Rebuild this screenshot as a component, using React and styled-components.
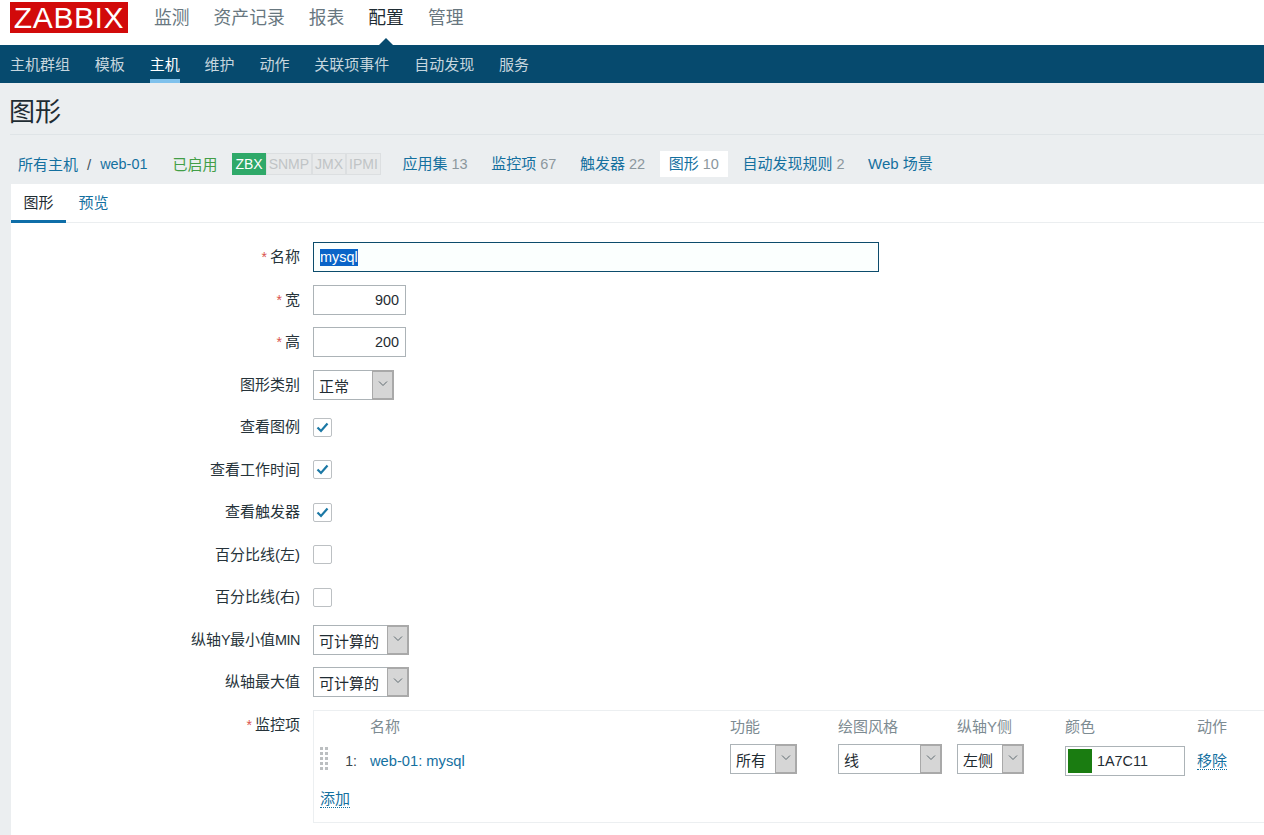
import React from "react";
import styled, { createGlobalStyle } from "styled-components";

const Global = createGlobalStyle`
  html, body { margin: 0; padding: 0; height: 835px; overflow: hidden; background: #ebeef0; }
  body { font-family: "Liberation Sans", "Noto Sans CJK SC", sans-serif; font-size: 15px; color: #1f2c33; }
  * { box-sizing: border-box; }
`;

const TopBar = styled.header`
  height: 45px; background: #fff; display: flex; align-items: flex-start; padding-left: 10px; gap: 26px;
`;
const Logo = styled.div`
  width: 118px; height: 31px; margin-top: 2px; background: #d20a0a; color: #fff;
  font-size: 30px; line-height: 32px; text-align: center; letter-spacing: 0.6px; font-family: "Liberation Sans", sans-serif;
`;
const TopMenu = styled.nav`
  display: flex; gap: 24px; height: 45px; align-items: flex-start; padding-top: 5.5px;
`;
const TopItem = styled.a`
  position: relative; font-size: 17.8px; line-height: 24px; color: ${p => (p.$active ? "#1f2c33" : "#68777f")};
  ${p => p.$active && `
    &::after {
      content: ""; position: absolute; left: 50%; margin-left: -7px; top: 32.5px;
      border-left: 7px solid transparent; border-right: 7px solid transparent; border-bottom: 7px solid #064a6e;
    }`}
`;
const SubBar = styled.nav`
  height: 38px; background: #064a6e; display: flex; gap: 24.85px; padding-left: 10px;
`;
const SubItem = styled.a`
  height: 38px; line-height: 39px; font-size: 15px; color: ${p => (p.$active ? "#fff" : "#c6d6de")};
  border-bottom: ${p => (p.$active ? "4px solid #7fc1ec" : "0")};
`;
const TitleBar = styled.div`
  height: 52px; margin-left: 10px; border-bottom: 1px solid #dfe4e7; display: flex; align-items: center;
`;
const Title = styled.h1`
  margin: 7px 0 0 -1px; font-size: 26px; font-weight: 400; line-height: 40px; color: #1f2c33;
`;
const HostBar = styled.div`
  display: flex; align-items: center; height: 26px; line-height: 25px; margin: 16px 0 7px 18px; font-size: 15px;
`;
const Link = styled.a`
  color: #14709f;
  ${p => p.$dotted && `border-bottom: 1px dotted #14709f; line-height: 17px;`}
`;
const HostName = styled(Link)` font-size: 14.4px; `;
const Slash = styled.span` margin: 0 9px; color: #46555c; `;
const Enabled = styled.span` color: #429e47; margin-left: 25px; margin-right: 15px; `;
const Badges = styled.div` display: flex; height: 22px; margin-right: 12.5px; `;
const Badge = styled.span`
  font-size: 14px; line-height: 20px; padding: 0 2px; border: 1px solid ${p => (p.$on ? "#2fa969" : "#dcdfe1")};
  background: ${p => (p.$on ? "#2fa969" : "#e8eaeb")}; color: ${p => (p.$on ? "#fff" : "#c0c4c6")};
`;
const HostTab = styled.div`
  height: 26px; line-height: 25px; padding: 0 9px; margin-right: 5.6px; white-space: nowrap;
  background: ${p => (p.$active ? "#fff" : "transparent")};
`;
const Count = styled.span` color: #8b979d; font-size: 14.5px; margin-left: 4px; `;
const Panel = styled.main`
  margin-left: 11px; background: #fff; height: 651px;
`;
const Tabs = styled.div`
  display: flex; height: 39px; border-bottom: 1px solid #ebeef0;
`;
const Tab = styled.a`
  height: 39px; line-height: 38px; padding: 0 12.5px; color: ${p => (p.$active ? "#1f2c33" : "#14709f")};
  border-bottom: ${p => (p.$active ? "3px solid #0f6ea8" : "0")};
`;
const Form = styled.div`
  display: grid; grid-template-columns: 289px 1fr; column-gap: 13px; row-gap: 12.5px; padding-top: 19px; grid-auto-rows: 30px;
`;
const Label = styled.div`
  text-align: right; line-height: 30px; white-space: nowrap; color: #26333a;
  ${p => p.$req && `&::before { content: "*"; color: #d9534f; margin-right: 3px; font-size: 14px; }`}
`;
const LabelLatin = styled.span` font-size: 14.4px; letter-spacing: -0.5px; `;
const Field = styled.div` display: flex; align-items: center; `;
const TextBox = styled.div`
  width: ${p => p.$w}px; height: 30px; border: 1px solid #acb3b7; background: #fff; padding: 0 6px;
  line-height: 28px; font-size: 14.4px; text-align: ${p => p.$align || "left"};
`;
const FocusBox = styled(TextBox)`
  border-color: #0c4c6c; background: #fbfffe;
`;
const Selected = styled.span`
  background: #0a64c8; color: #fff; display: inline-block; line-height: 17px; height: 17px;
`;
const SelectBox = styled.div`
  width: ${p => p.$w}px; height: 30px; display: flex; border: 1px solid #acb3b7; border-right: 0; background: #fff;
`;
const SelectText = styled.span`
  flex: 1; padding-left: 5px; line-height: 31px; font-size: 15px; white-space: nowrap;
`;
const SelectBtn = styled.span`
  width: 22px; margin: -1px 0; background: #d6d6d6; border: 2px solid #a9a9a9; border-left-width: 1px;
  display: flex; align-items: flex-start; justify-content: center; padding-top: 8px;
`;
const CheckBox = styled.span`
  width: 19px; height: 19px; border: 1px solid #bcc0c3; border-radius: 2px; background: #fff; display: flex; align-items: center; justify-content: center;
`;
const ItemsBox = styled.section`
  grid-column: 2; height: 113px; border: 1px solid #eceff1; border-right: 0; padding: 0 0 0 6px;
`;
const ItemsGrid = styled.div`
  display: grid; grid-template-columns: 50px 360px 108px 119px 108px 132px 60px;
  grid-template-rows: 33px 30px; align-items: center;
`;
const Head = styled.span` color: #7d8b92; font-size: 15px; white-space: nowrap; margin-top: -4px; `;
const RowStart = styled.div` display: flex; align-items: center; justify-content: space-between; padding-right: 13px; `;
const Num = styled.span` font-size: 14px; color: #3b474d; padding-top: 4px; `;
const ItemLink = styled(Link)` padding-top: 4px; font-size: 14.7px; `;
const RemoveCell = styled.span` padding-top: 4px; `;
const ColorBox = styled.div`
  width: 120px; height: 30px; margin-top: 4px; border: 1px solid #acb3b7; display: flex; align-items: center; padding-left: 2px; gap: 5px; font-size: 14.4px;
`;
const Swatch = styled.span` width: 24px; height: 24px; background: #1a7c11; `;
const AddRow = styled.div` margin-top: 16px; `;
const Chevron = () => (
  <svg width="10" height="7" viewBox="0 0 10 7"><path d="M1 1.5 L5 5.5 L9 1.5" fill="none" stroke="#5e6a70" strokeWidth="1" /></svg>
);
const Tick = () => (
  <svg width="13" height="11" viewBox="0 0 13 11"><path d="M1.5 5.5 L5 9 L11.5 1.5" fill="none" stroke="#1b78a5" strokeWidth="2.2" /></svg>
);
const Handle = () => (
  <svg width="8" height="23" viewBox="0 0 8 23" fill="#bcbfc1">
    {[0, 5, 10, 15, 20].map(y => (
      <React.Fragment key={y}>
        <rect x="0" y={y} width="3" height="3" />
        <rect x="5" y={y} width="3" height="3" />
      </React.Fragment>
    ))}
  </svg>
);
const Select = ({ w, children }) => (
  <SelectBox $w={w}><SelectText>{children}</SelectText><SelectBtn><Chevron /></SelectBtn></SelectBox>
);

const Row = ({ label, req, children }) => (
  <>
    <Label $req={req}>{label}</Label>
    <Field>{children}</Field>
  </>
);

export default function App() {
  const chk = <CheckBox><Tick /></CheckBox>;
  return (
    <>
      <Global />
      <TopBar>
        <Logo>ZABBIX</Logo>
        <TopMenu>
          <TopItem>监测</TopItem><TopItem>资产记录</TopItem><TopItem>报表</TopItem>
          <TopItem $active>配置</TopItem><TopItem>管理</TopItem>
        </TopMenu>
      </TopBar>
      <SubBar>
        {["主机群组", "模板", "主机", "维护", "动作", "关联项事件", "自动发现", "服务"].map(t => (
          <SubItem key={t} $active={t === "主机"}>{t}</SubItem>
        ))}
      </SubBar>
      <TitleBar><Title>图形</Title></TitleBar>
      <HostBar>
        <Link>所有主机</Link><Slash>/</Slash><HostName>web-01</HostName>
        <Enabled>已启用</Enabled>
        <Badges><Badge $on>ZBX</Badge><Badge>SNMP</Badge><Badge>JMX</Badge><Badge>IPMI</Badge></Badges>
        <HostTab><Link>应用集</Link><Count>13</Count></HostTab>
        <HostTab><Link>监控项</Link><Count>67</Count></HostTab>
        <HostTab><Link>触发器</Link><Count>22</Count></HostTab>
        <HostTab $active><Link>图形</Link><Count>10</Count></HostTab>
        <HostTab><Link>自动发现规则</Link><Count>2</Count></HostTab>
        <HostTab><Link>Web 场景</Link></HostTab>
      </HostBar>
      <Panel>
        <Tabs><Tab $active>图形</Tab><Tab>预览</Tab></Tabs>
        <Form>
          <Row label="名称" req><FocusBox $w={566}><Selected>mysql</Selected></FocusBox></Row>
          <Row label="宽" req><TextBox $w={93} $align="right">900</TextBox></Row>
          <Row label="高" req><TextBox $w={93} $align="right">200</TextBox></Row>
          <Row label="图形类别"><Select w={81}>正常</Select></Row>
          <Row label="查看图例">{chk}</Row>
          <Row label="查看工作时间">{chk}</Row>
          <Row label="查看触发器">{chk}</Row>
          <Row label="百分比线(左)"><CheckBox /></Row>
          <Row label="百分比线(右)"><CheckBox /></Row>
          <Row label={<>纵轴<LabelLatin>Y</LabelLatin>最小值<LabelLatin>MIN</LabelLatin></>}><Select w={96}>可计算的</Select></Row>
          <Row label="纵轴最大值"><Select w={96}>可计算的</Select></Row>
          <Label $req>监控项</Label>
          <ItemsBox>
            <ItemsGrid>
              <span />
              <Head>名称</Head><Head>功能</Head><Head>绘图风格</Head><Head>纵轴Y侧</Head><Head>颜色</Head><Head>动作</Head>
              <RowStart><Handle /><Num>1:</Num></RowStart>
              <ItemLink>web-01: mysql</ItemLink>
              <Select w={67}>所有</Select>
              <Select w={104}>线</Select>
              <Select w={67}>左侧</Select>
              <ColorBox><Swatch />1A7C11</ColorBox>
              <RemoveCell><Link $dotted>移除</Link></RemoveCell>
            </ItemsGrid>
            <AddRow><Link $dotted>添加</Link></AddRow>
          </ItemsBox>
        </Form>
      </Panel>
    </>
  );
}
